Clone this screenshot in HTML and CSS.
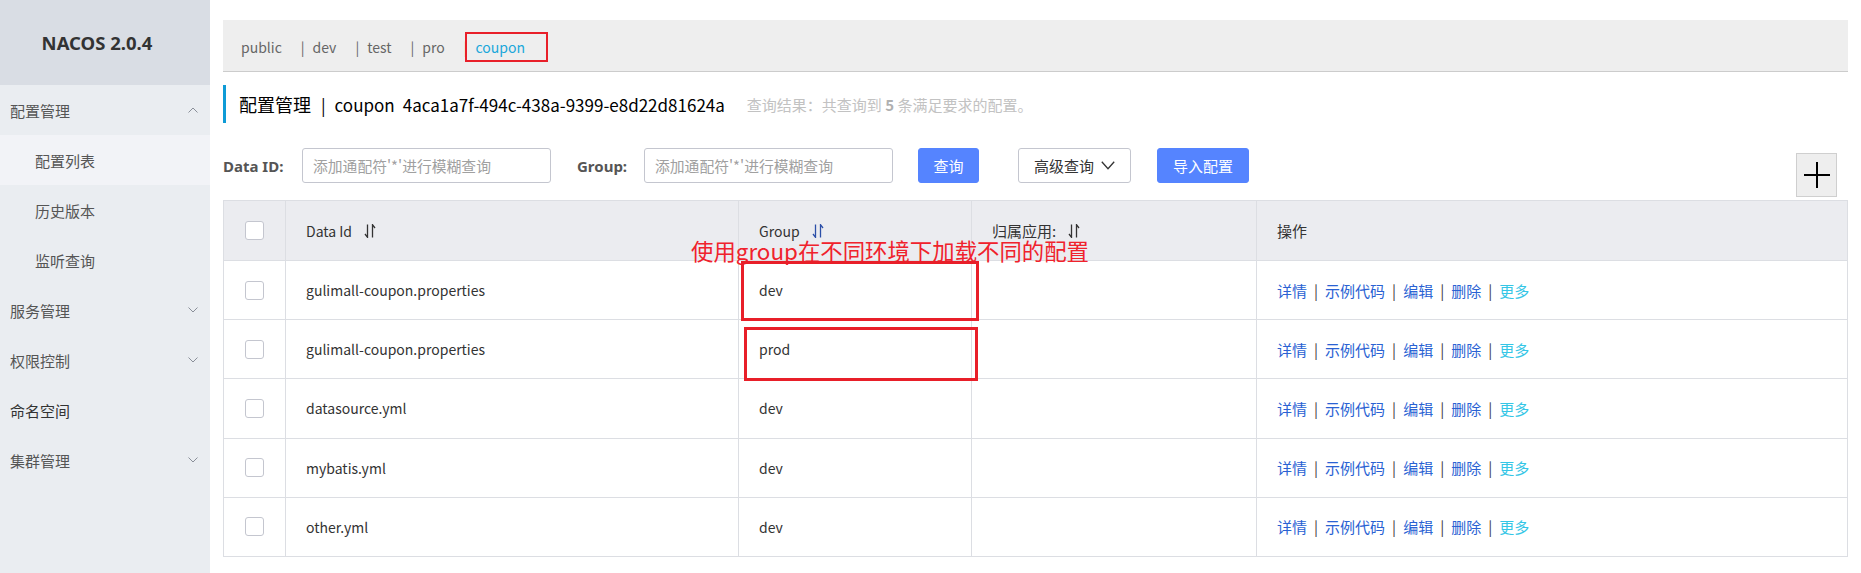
FILE: index.html
```html
<!DOCTYPE html>
<html lang="zh-CN">
<head>
<meta charset="utf-8">
<title>NACOS 2.0.4</title>
<link rel="stylesheet" href="styles.css">
</head>
<body>
<div class="app">
  <aside class="sidebar">
    <div class="brand">NACOS 2.0.4</div>
    <ul class="menu">
      <li class="menu-group"><span>配置管理</span>
        <svg class="chev" viewBox="0 0 10 6" width="10" height="6"><path d="M0.5 5.5 L5 1 L9.5 5.5" /></svg>
      </li>
      <li class="menu-sub active">配置列表</li>
      <li class="menu-sub">历史版本</li>
      <li class="menu-sub">监听查询</li>
      <li class="menu-group"><span>服务管理</span>
        <svg class="chev" viewBox="0 0 10 6" width="10" height="6"><path d="M0.5 0.5 L5 5 L9.5 0.5" /></svg>
      </li>
      <li class="menu-group"><span>权限控制</span>
        <svg class="chev" viewBox="0 0 10 6" width="10" height="6"><path d="M0.5 0.5 L5 5 L9.5 0.5" /></svg>
      </li>
      <li class="menu-group plain"><span>命名空间</span></li>
      <li class="menu-group"><span>集群管理</span>
        <svg class="chev" viewBox="0 0 10 6" width="10" height="6"><path d="M0.5 0.5 L5 5 L9.5 0.5" /></svg>
      </li>
    </ul>
  </aside>

  <main class="main">
    <div class="ns-bar">
      <span class="ns-item">public</span>
      <span class="ns-item"><span class="ns-sep">|</span>dev</span>
      <span class="ns-item"><span class="ns-sep">|</span>test</span>
      <span class="ns-item"><span class="ns-sep">|</span>pro</span>
      <span class="ns-item"><span class="ns-sep">|</span><span class="ns-current">coupon</span></span>
      <span class="mark mark-ns"></span>
    </div>

    <div class="title-row">
      <span class="title-main">配置管理</span><span class="title-sep">|</span><span class="title-ns">coupon</span><span class="title-id">4aca1a7f-494c-438a-9399-e8d22d81624a</span>
      <span class="summary">查询结果：共查询到 <b>5</b> 条满足要求的配置。</span>
    </div>

    <div class="search-row">
      <label class="field-label label-dataid">Data ID:</label>
      <div class="input"><span class="placeholder">添加通配符'*'进行模糊查询</span></div>
      <label class="field-label label-group">Group:</label>
      <div class="input input-group"><span class="placeholder">添加通配符'*'进行模糊查询</span></div>
      <button class="btn btn-primary btn-query">查询</button>
      <button class="btn btn-normal btn-adv">高级查询<svg class="adv-chev" viewBox="0 0 14 9" width="14" height="9"><path d="M0.8 0.8 L7 7.8 L13.2 0.8" /></svg></button>
      <button class="btn btn-primary btn-import">导入配置</button>
      <button class="btn-plus" aria-label="新建">
        <svg viewBox="0 0 26 26" width="26" height="26"><path d="M13 0 V26 M0 13 H26" /></svg>
      </button>
    </div>

    <div class="table">
      <div class="row head">
        <div class="cell c-check"><span class="checkbox"></span></div>
        <div class="cell latin">Data Id
          <svg class="sort" viewBox="0 0 12 14" width="12" height="14"><path d="M3.5 0.5 V13.3 L1 10 M8.5 13.5 V0.7 L11 4" /></svg>
        </div>
        <div class="cell latin">Group
          <svg class="sort sort-active" viewBox="0 0 12 14" width="12" height="14"><path d="M3.5 0.5 V13.3 L1 10 M8.5 13.5 V0.7 L11 4" /></svg>
        </div>
        <div class="cell">归属应用:
          <svg class="sort" viewBox="0 0 12 14" width="12" height="14"><path d="M3.5 0.5 V13.3 L1 10 M8.5 13.5 V0.7 L11 4" /></svg>
        </div>
        <div class="cell">操作</div>
      </div>

      <div class="row">
        <div class="cell c-check"><span class="checkbox"></span></div>
        <div class="cell latin">gulimall-coupon.properties</div>
        <div class="cell latin">dev</div>
        <div class="cell"></div>
        <div class="cell actions"><a>详情</a><span class="sep">|</span><a>示例代码</a><span class="sep">|</span><a>编辑</a><span class="sep">|</span><a>删除</a><span class="sep">|</span><a class="more">更多</a></div>
      </div>
      <div class="row">
        <div class="cell c-check"><span class="checkbox"></span></div>
        <div class="cell latin">gulimall-coupon.properties</div>
        <div class="cell latin">prod</div>
        <div class="cell"></div>
        <div class="cell actions"><a>详情</a><span class="sep">|</span><a>示例代码</a><span class="sep">|</span><a>编辑</a><span class="sep">|</span><a>删除</a><span class="sep">|</span><a class="more">更多</a></div>
      </div>
      <div class="row">
        <div class="cell c-check"><span class="checkbox"></span></div>
        <div class="cell latin">datasource.yml</div>
        <div class="cell latin">dev</div>
        <div class="cell"></div>
        <div class="cell actions"><a>详情</a><span class="sep">|</span><a>示例代码</a><span class="sep">|</span><a>编辑</a><span class="sep">|</span><a>删除</a><span class="sep">|</span><a class="more">更多</a></div>
      </div>
      <div class="row">
        <div class="cell c-check"><span class="checkbox"></span></div>
        <div class="cell latin">mybatis.yml</div>
        <div class="cell latin">dev</div>
        <div class="cell"></div>
        <div class="cell actions"><a>详情</a><span class="sep">|</span><a>示例代码</a><span class="sep">|</span><a>编辑</a><span class="sep">|</span><a>删除</a><span class="sep">|</span><a class="more">更多</a></div>
      </div>
      <div class="row">
        <div class="cell c-check"><span class="checkbox"></span></div>
        <div class="cell latin">other.yml</div>
        <div class="cell latin">dev</div>
        <div class="cell"></div>
        <div class="cell actions"><a>详情</a><span class="sep">|</span><a>示例代码</a><span class="sep">|</span><a>编辑</a><span class="sep">|</span><a>删除</a><span class="sep">|</span><a class="more">更多</a></div>
      </div>

      <div class="annot-text">使用group在不同环境下加载不同的配置</div>
      <span class="mark mark-dev"></span>
      <span class="mark mark-prod"></span>
    </div>
  </main>
</div>
</body>
</html>
```

FILE: styles.css
```css
* { box-sizing: border-box; }

html, body {
  margin: 0;
  padding: 0;
  background: #fff;
  font-family: "Noto Sans CJK SC", "Noto Sans", sans-serif;
  color: #333;
}

.app {
  display: flex;
  width: 1861px;
  height: 573px;
  overflow: hidden;
}

/* ---------- sidebar ---------- */
.sidebar {
  width: 210px;
  flex: 0 0 210px;
  height: 573px;
  background: #eaedf1;
}

.brand {
  height: 85px;
  background: #d9dde4;
  display: flex;
  align-items: center;
  justify-content: center;
  padding-right: 16px;
  font-size: 18.5px;
  font-weight: 700;
  color: #333;
  font-family: "Noto Sans", "Noto Sans CJK SC", sans-serif;
}

.menu {
  list-style: none;
  margin: 0;
  padding: 0;
}

.menu li {
  height: 50px;
  display: flex;
  align-items: center;
  font-size: 15px;
  color: #555;
}

.menu-group {
  justify-content: space-between;
  padding: 0 12px 0 10px;
}

.menu-group.plain { color: #333; }

.menu-sub {
  padding-left: 35px;
}

.menu-sub.active {
  background: #f2f3f7;
}

.chev {
  fill: none;
  stroke: #8a8f99;
  stroke-width: 1;
}

/* ---------- main ---------- */
.main {
  flex: 1;
  padding: 20px 13px 0 13px;
  min-width: 0;
}

.ns-bar {
  position: relative;
  height: 52px;
  background: #eeeeee;
  border-bottom: 1px solid #cccccc;
  display: flex;
  align-items: center;
  padding: 2px 0 0 18px;
  font-size: 14px;
  color: #666;
}

.ns-item { margin-right: 19px; white-space: nowrap; }
.ns-sep { margin-right: 8px; color: #666; }
.ns-current { color: #1aa7da; }

.mark {
  position: absolute;
  border: 3px solid #e81f29;
  pointer-events: none;
}

.mark-ns {
  left: 242px;
  top: 12px;
  width: 83px;
  height: 30px;
  border-width: 2px;
}

.title-row {
  margin-top: 13px;
  height: 38px;
  border-left: 3px solid #0e9bd6;
  padding-left: 13px;
  display: flex;
  align-items: center;
  font-size: 17px;
  color: #000;
  white-space: nowrap;
}

.title-main { font-size: 18px; }
.title-sep { margin: 0 9px 0 10px; }
.title-id { margin-left: 8px; }

.summary {
  margin-left: 22px;
  font-size: 15px;
  color: #c2c2c2;
}

.summary b { color: #b0b0b0; font-weight: 700; }

.search-row {
  margin-top: 25px;
  display: flex;
  align-items: flex-start;
  height: 49px;
}

.field-label {
  height: 35px;
  display: flex;
  align-items: center;
  font-size: 15px;
  font-weight: 700;
  color: #555;
  font-family: "Noto Sans", "Noto Sans CJK SC", sans-serif;
  flex-shrink: 0;
}

.label-dataid { width: 79px; }
.label-group { width: 67px; margin-left: 26px; }

.input {
  width: 249px;
  flex-shrink: 0;
  height: 35px;
  border: 1px solid #c4c6cf;
  border-radius: 3px;
  display: flex;
  align-items: center;
  padding-left: 10px;
  background: #fff;
}

.placeholder {
  font-size: 14.8px;
  color: #a0a0a0;
  white-space: nowrap;
}

.btn {
  height: 35px;
  border-radius: 3px;
  font-family: inherit;
  font-size: 15px;
  padding: 0 15px;
  display: flex;
  align-items: center;
  white-space: nowrap;
  flex-shrink: 0;
  cursor: pointer;
}

.btn-primary {
  background: #5584ff;
  border: 1px solid #5584ff;
  color: #fff;
}

.btn-normal {
  background: #fff;
  border: 1px solid #c4c6cf;
  color: #333;
}

.btn-query { margin-left: 25px; width: 61px; justify-content: center; padding: 0; }
.btn-adv { margin-left: 39px; width: 113px; justify-content: center; padding: 0; }
.btn-import { margin-left: 26px; width: 92px; justify-content: center; padding: 0; }

.adv-chev {
  margin-left: 7px;
  fill: none;
  stroke: #333;
  stroke-width: 1.3;
}

.btn-plus {
  margin-left: auto;
  margin-right: 11px;
  margin-top: 5px;
  width: 41px;
  height: 44px;
  flex-shrink: 0;
  background: #eeeeee;
  border: 1px solid #cfcfcf;
  display: flex;
  align-items: center;
  justify-content: center;
  padding: 0;
}

.btn-plus svg {
  fill: none;
  stroke: #000;
  stroke-width: 2;
}

/* ---------- table ---------- */
.table {
  position: relative;
  margin-top: 3px;
  border-left: 1px solid #dcdee3;
  border-right: 1px solid #dcdee3;
  border-top: 1px solid #dcdee3;
  font-size: 15px;
  color: #333;
}

.row {
  display: grid;
  grid-template-columns: 62px 453px 233px 285px 1fr;
  height: 59.2px;
  border-bottom: 1px solid #dcdee3;
}

.row.head {
  height: 60px;
  background: #ebecf0;
}

.cell {
  display: flex;
  align-items: center;
  padding: 0 20px;
  border-right: 1px solid #dcdee3;
  white-space: nowrap;
}

.cell.latin { font-size: 14px; }

.cell:last-child { border-right: none; }

.c-check {
  justify-content: center;
  padding: 0;
}

.checkbox {
  width: 19px;
  height: 19px;
  border: 1px solid #c4c6cf;
  border-radius: 3px;
  background: #fff;
}

.sort {
  margin-left: 12px;
  fill: none;
  stroke: #333;
  stroke-width: 1.3;
}

.sort-active { stroke: #2b4fa8; }

.actions a {
  color: #2a62d3;
  text-decoration: none;
}

.actions a.more { color: #35c6e6; }

.actions .sep {
  margin: 0 7px;
  color: #444;
}

.annot-text {
  position: absolute;
  left: 467px;
  top: 38px;
  font-size: 22.4px;
  line-height: 1;
  color: #f0222c;
  white-space: nowrap;
  font-family: "Noto Sans CJK SC", sans-serif;
}

.mark-dev {
  left: 517px;
  top: 60px;
  width: 238px;
  height: 60px;
}

.mark-prod {
  left: 520px;
  top: 126px;
  width: 234px;
  height: 54px;
}
```
